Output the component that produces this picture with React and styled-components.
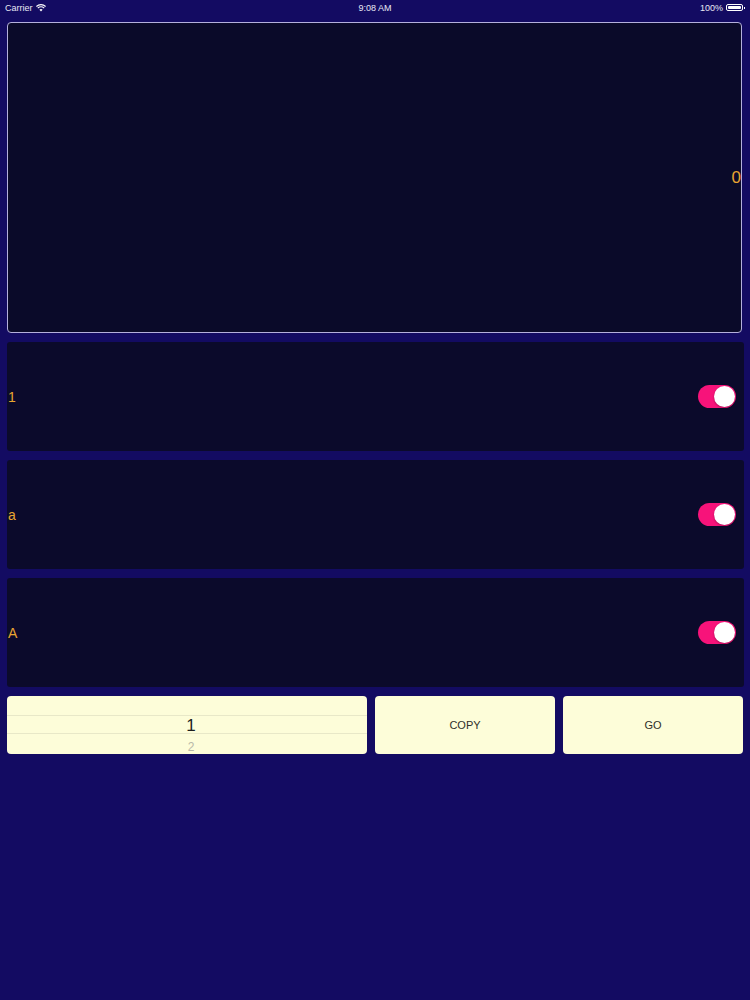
import React from "react";
import styled, { createGlobalStyle } from "styled-components";

const Global = createGlobalStyle`
  html, body { margin: 0; padding: 0; background: #130b62; }
  body { font-family: "Liberation Sans", Arial, sans-serif; }
  #root { min-height: 1000px; background: #130b62; }
`;

const Page = styled.div`
  width: 750px;
  min-height: 1000px;
  background: #130b62;
  display: flex;
  flex-direction: column;
`;

const StatusBar = styled.div`
  height: 15px;
  display: grid;
  grid-template-columns: 1fr auto 1fr;
  align-items: center;
  padding: 0 5px;
  color: #e8e8f4;
  font-size: 9px;
  font-family: "Liberation Sans", Arial, sans-serif;
`;

const StatusLeft = styled.div`
  display: flex;
  align-items: center;
  gap: 3px;
`;

const StatusRight = styled.div`
  display: flex;
  align-items: center;
  justify-content: flex-end;
  gap: 3px;
`;

const Battery = styled.div`
  width: 17px;
  height: 7px;
  border: 1px solid #ffffff;
  border-radius: 2px;
  padding: 1px;
  box-sizing: border-box;
  position: relative;
  margin-right: 2px;
  &::before {
    content: "";
    display: block;
    width: 100%;
    height: 100%;
    background: #ffffff;
    border-radius: 1px;
  }
  &::after {
    content: "";
    position: absolute;
    right: -3px;
    top: 1.5px;
    width: 1.5px;
    height: 2.5px;
    background: #ffffff;
  }
`;

const Content = styled.div`
  display: flex;
  flex-direction: column;
  padding: 7px 6px 0 7px;
`;

const Display = styled.div`
  height: 309px;
  margin-right: 2px;
  border: 1px solid #b4b0dc;
  border-radius: 4px;
  background: #0a0a29;
  display: flex;
  align-items: center;
  justify-content: flex-end;
  padding-right: 0;
  color: #e8a531;
  font-size: 17px;
`;

const Rows = styled.div`
  display: flex;
  flex-direction: column;
  gap: 9px;
  margin-top: 9px;
`;

const Row = styled.div`
  height: 109px;
  background: #0b0a2b;
  border-radius: 3px;
  display: flex;
  align-items: center;
  justify-content: space-between;
  padding: 0 8px 0 1px;
`;

const Label = styled.span`
  color: #e8a531;
  font-size: 14px;
`;

const Switch = styled.div`
  width: 38px;
  height: 23px;
  border-radius: 12px;
  background: #f7137a;
  position: relative;
  &::after {
    content: "";
    position: absolute;
    right: 1px;
    top: 1px;
    width: 21px;
    height: 21px;
    border-radius: 50%;
    background: #ffffff;
    box-shadow: 0 1px 2px rgba(0, 0, 0, 0.3);
  }
`;

const Controls = styled.div`
  display: flex;
  gap: 8px;
  margin-top: 9px;
  margin-right: 1px;
`;

const Panel = styled.div`
  height: 58px;
  background: #fdfdd9;
  border-radius: 4px;
  box-sizing: border-box;
  flex: ${(p) => p.$grow};
  display: flex;
  align-items: center;
  justify-content: center;
  color: #2f2f2a;
  font-size: 11px;
  overflow: hidden;
`;

const Picker = styled(Panel)`
  flex-direction: column;
  justify-content: flex-start;
`;

const PickerBand = styled.div`
  width: 100%;
  height: 19px;
  box-sizing: border-box;
  flex-shrink: 0;
  display: flex;
  align-items: center;
  justify-content: center;
  padding-left: 8px;
  border-top: ${(p) => (p.$lined ? "1px solid #e8e8c8" : "none")};
  border-bottom: ${(p) => (p.$lined ? "1px solid #e8e8c8" : "none")};
  color: ${(p) => (p.$faded ? "#b8b8a8" : "#1e1e1e")};
  font-size: ${(p) => (p.$faded ? "12px" : "17px")};
  padding-top: ${(p) => (p.$faded ? "6px" : "2px")};
`;

export default function App() {
  return (
    <Page>
      <Global />
      <StatusBar>
        <StatusLeft>
          Carrier
          <svg width="10" height="8" viewBox="0 0 10 8">
            <path d="M5 7.5 L3.4 5.7 A2.4 2.4 0 0 1 6.6 5.7 Z" fill="#fff" />
            <path d="M1.8 4.1 A4.6 4.6 0 0 1 8.2 4.1" stroke="#fff" strokeWidth="1.1" fill="none" />
            <path d="M0.4 2.5 A6.7 6.7 0 0 1 9.6 2.5" stroke="#fff" strokeWidth="1.1" fill="none" />
          </svg>
        </StatusLeft>
        <div>9:08 AM</div>
        <StatusRight>
          100%
          <Battery />
        </StatusRight>
      </StatusBar>
      <Content>
        <Display>0</Display>
        <Rows>
          <Row>
            <Label>1</Label>
            <Switch />
          </Row>
          <Row>
            <Label>a</Label>
            <Switch />
          </Row>
          <Row>
            <Label>A</Label>
            <Switch />
          </Row>
        </Rows>
        <Controls>
          <Picker $grow="0 0 360px">
            <PickerBand />
            <PickerBand $lined>1</PickerBand>
            <PickerBand $faded>2</PickerBand>
          </Picker>
          <Panel $grow="0 0 180px">COPY</Panel>
          <Panel $grow="1">GO</Panel>
        </Controls>
      </Content>
    </Page>
  );
}
